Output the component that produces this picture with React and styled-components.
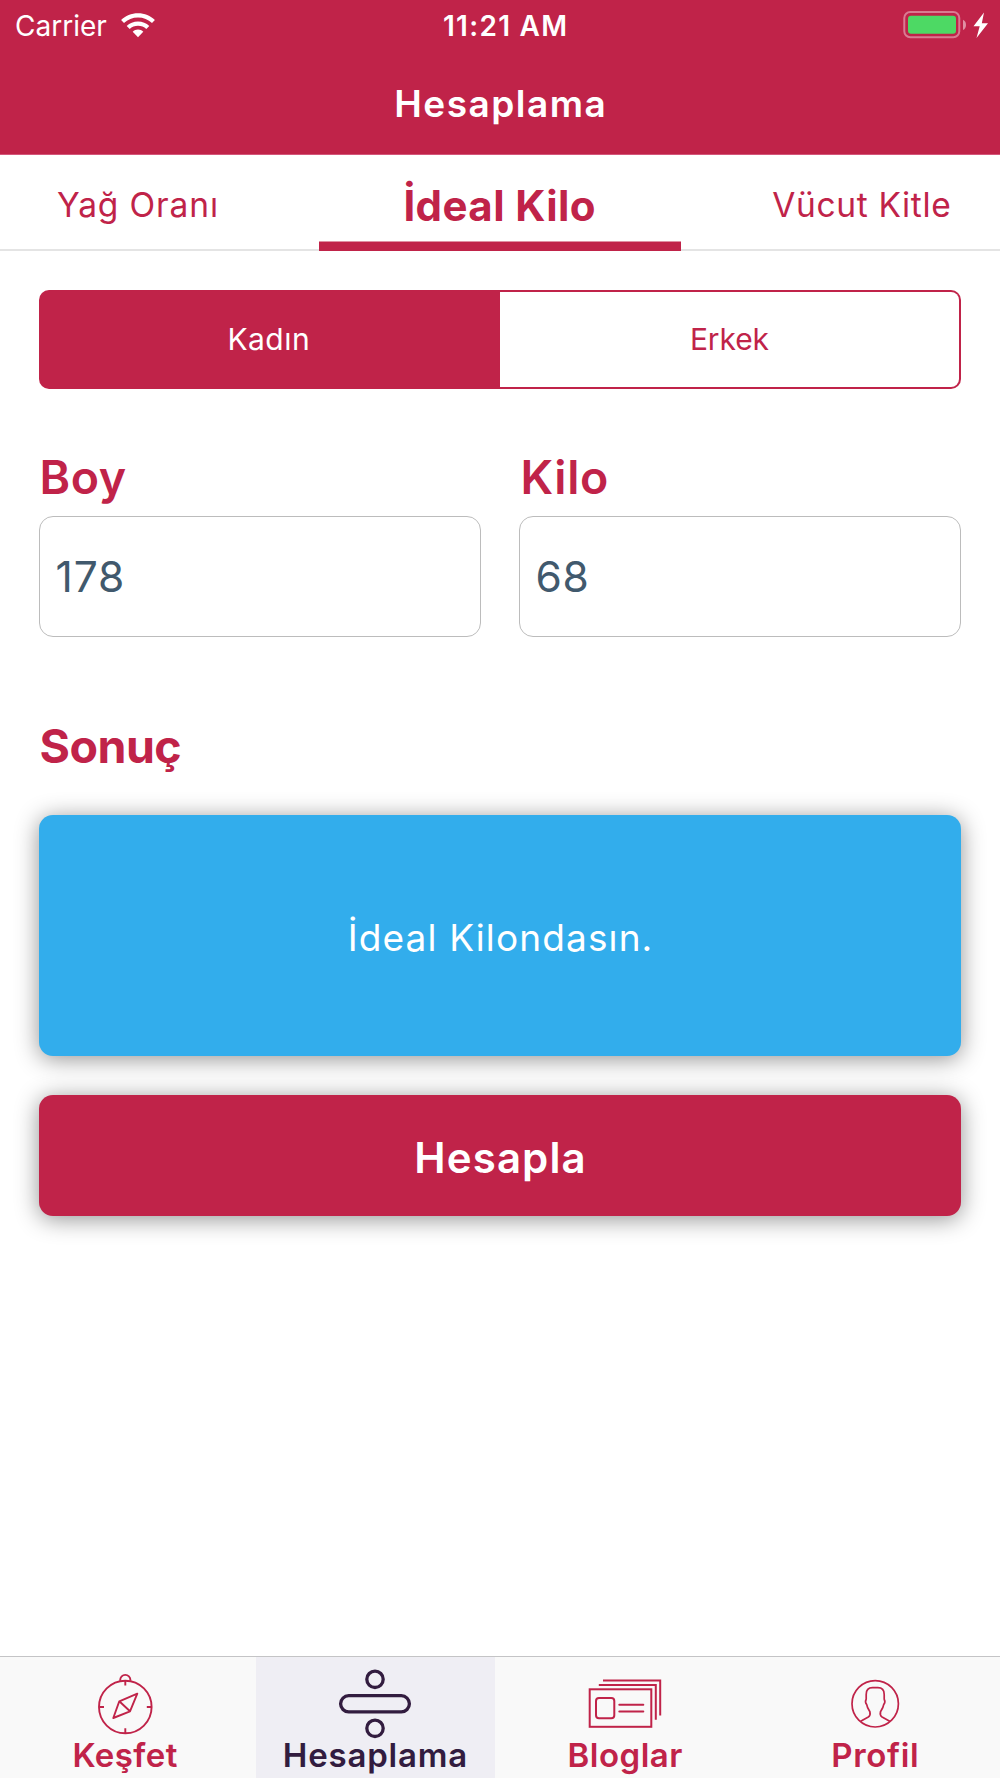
import React, { useState } from "react";
import styled, { createGlobalStyle } from "styled-components";

const crimson = "#c02349";
const plum = "#321c3f";
const shadow = "0 3px 23px rgba(0, 0, 0, 0.43)";

const GlobalStyle = createGlobalStyle`
  *, *::before, *::after { box-sizing: border-box; }
  body { margin: 0; background: #fff; }
  button, input { margin: 0; font-family: inherit; }
`;

const Screen = styled.div`
  display: flex;
  flex-direction: column;
  width: 1000px;
  height: 1778px;
  overflow: hidden;
  background: #fff;
  color: ${crimson};
  font-family: Inter, Roboto, sans-serif;
`;

/* Tracked text; the trailing letter gap is cancelled so it centres on its ink. */
const Text = styled.span`
  display: block;
  white-space: nowrap;
  font-size: ${(p) => p.$size}px;
  font-weight: ${(p) => p.$weight || 400};
  letter-spacing: ${(p) => p.$track || 0}px;
  margin-right: ${(p) => -(p.$track || 0)}px;
`;

const Header = styled.header`
  flex: none;
  height: 155px;
  background: ${crimson};
  border-bottom: 1px solid #d4567a;
  color: #fff;
`;

const StatusBar = styled.div`
  display: grid;
  grid-template-columns: 1fr auto 1fr;
  align-items: center;
  height: 50px;
  padding: 0 12px 0 15px;
`;

const StatusLeft = styled.div`
  display: flex;
  align-items: center;
  gap: 14px;
`;

const StatusRight = styled.div`
  display: flex;
  justify-content: flex-end;
`;

const StatusText = styled(Text)`
  padding-top: 1px;
`;

const Clock = styled(StatusText)`
  padding-left: 7px;
`;

const NavTitle = styled.h1`
  display: flex;
  align-items: center;
  justify-content: center;
  height: 104px;
  margin: 0;
  padding-top: 2px;
`;

const TabStrip = styled.nav`
  flex: none;
  display: flex;
  justify-content: center;
  height: 96px;
  overflow: hidden;
  box-shadow: inset 0 -2px 0 #e4e4e4;
`;

const PlainButton = styled.button`
  display: flex;
  align-items: center;
  justify-content: center;
  padding: 0;
  border: 0;
  background: transparent;
  color: inherit;
`;

const Tab = styled(PlainButton)`
  flex: none;
  width: 362px;
  padding-top: 4px;
  padding-right: 1px;
  box-shadow: ${(p) => (p.$active ? `inset 0 -9.5px 0 ${crimson}` : "none")};
`;

const Content = styled.main`
  flex: 1;
  display: flex;
  flex-direction: column;
  padding: 39px 39px 0;
`;

const Segments = styled.div`
  display: grid;
  grid-template-columns: 1fr 1fr;
  height: 99px;
`;

const Segment = styled(PlainButton)`
  padding: 0 4px 1px 0;
  border: 2px solid ${crimson};
  background: ${(p) => (p.$active ? crimson : "#fff")};
  color: ${(p) => (p.$active ? "#fff" : crimson)};
  &:first-child { border-radius: 10px 0 0 10px; border-right: 0; }
  &:last-child { border-radius: 0 10px 10px 0; border-left: 0; padding-right: 0; }
`;

const Fields = styled.div`
  display: grid;
  grid-template-columns: 1fr 1fr;
  gap: 38px;
  margin-top: 56px;
`;

const Field = styled.label`
  display: flex;
  flex-direction: column;
  gap: 11px;
`;

const Heading = styled(Text)`
  height: 60px;
  line-height: ${(p) => p.$line}px;
  padding-left: ${(p) => p.$indent}px;
`;

const Input = styled.input`
  width: 100%;
  height: 121px;
  padding: 0 16px 0 ${(p) => p.$indent}px;
  border: 1px solid #bcbcbc;
  border-radius: 14px;
  outline: none;
  background: #fff;
  color: #41596d;
  font-size: 42.5px;
  letter-spacing: ${(p) => p.$track}px;
`;

const Result = styled.section`
  display: flex;
  flex-direction: column;
  gap: 42px;
  margin-top: 76px;
`;

const ResultCard = styled.div`
  display: flex;
  align-items: center;
  justify-content: center;
  height: 241px;
  padding-top: 3px;
  border-radius: 14px;
  background: #32adec;
  box-shadow: ${shadow};
  color: #fff;
`;

const SubmitButton = styled(PlainButton)`
  height: 121px;
  margin-top: 39px;
  padding-top: 3px;
  border-radius: 14px;
  background: ${crimson};
  box-shadow: ${shadow};
  color: #fff;
`;

const TabBar = styled.footer`
  flex: none;
  display: grid;
  grid-template-columns: repeat(4, 1fr);
  height: 122px;
  border-top: 1px solid #c4c4c6;
  background: #f9f9f9;
`;

const TabItem = styled(PlainButton)`
  flex-direction: column;
  justify-content: flex-start;
  margin: 0 5px 0 6px;
  padding-right: 1px;
  background: ${(p) => (p.$active ? "#efeef4" : "transparent")};
  color: ${(p) => (p.$active ? plum : crimson)};
`;

const TabLabel = styled(Text)`
  height: 40px;
  line-height: 43px;
`;

const LineIcon = styled.svg`
  flex: none;
  display: block;
  width: 100px;
  height: 77px;
  overflow: visible;
  fill: none;
  stroke: currentColor;
  stroke-width: ${(p) => p.$stroke};
`;

const WifiIcon = () => (
  <svg width="34" height="25" viewBox="0 0 34 25" fill="#fff">
    <path d="M17 0.3C23.6 0.3 29.6 2.9 33.9 7.1L31 10.1C27.3 6.6 22.4 4.6 17 4.6S6.7 6.6 3 10.1L0.1 7.1C4.4 2.9 10.4 0.3 17 0.3Z" />
    <path d="M17 8.4C21.4 8.4 25.4 10.1 28.3 12.9L25.3 15.9C23.1 13.9 20.2 12.7 17 12.7S10.9 13.9 8.7 15.9L5.7 12.9C8.6 10.1 12.6 8.4 17 8.4Z" />
    <path d="M17 16.6C19 16.6 20.9 17.4 22.3 18.7L17 24.3L11.7 18.7C13.1 17.4 15 16.6 17 16.6Z" />
  </svg>
);

const BatteryIcon = () => (
  <svg width="85" height="28" viewBox="0 0 85 28">
    <rect x="1.3" y="1" width="55" height="25.2" rx="6" fill="none" stroke="#fff" strokeOpacity="0.4" strokeWidth="2" />
    <rect x="5" y="4.7" width="48" height="18" rx="3" fill="#4dd964" />
    <path d="M60 8.7V19C64 17.2 64 10.5 60 8.7Z" fill="#fff" fillOpacity="0.5" />
    <path d="M81 1.5L70.5 15.3H76.7L73.5 27L85 12.2H78.8Z" fill="#fff" />
  </svg>
);

const CompassIcon = () => (
  <LineIcon viewBox="0 0 100 77" $stroke={1.9}>
    <circle cx="50.3" cy="50" r="26.3" />
    <path d="M45.2 23.8V23A5.1 5.1 0 0 1 55.4 23V23.8" />
    <path d="M50.3 23.7V28.6M50.3 71.3V76M24 50H29M71.8 50H76.8" />
    <path d="M62.3 36.7L44.3 44.3L38.3 61L55 54.3ZM44.3 44.3L55 54.3" strokeLinejoin="round" />
  </LineIcon>
);

const DivideIcon = () => (
  <LineIcon viewBox="0 0 100 77" $stroke={3.3}>
    <circle cx="50" cy="22.3" r="8.2" />
    <rect x="15.6" y="38.7" width="68.8" height="16.2" rx="8.1" />
    <circle cx="50" cy="71.3" r="8.2" />
  </LineIcon>
);

const CardsIcon = () => (
  <LineIcon viewBox="0 0 100 77" $stroke={2}>
    <rect x="14.7" y="32.3" width="61.6" height="37.5" />
    <rect x="21" y="41" width="18.3" height="20.3" rx="3" />
    <path d="M44.3 47.8H68.3M44.3 54.4H68.3" strokeLinecap="round" />
    <path d="M23.8 28H80.8V62.8M28 23.6H85.2V58.6" />
  </LineIcon>
);

const ProfileIcon = () => (
  <LineIcon viewBox="0 0 100 77" $stroke={1.7}>
    <circle cx="50.2" cy="46.8" r="23.2" />
    <path
      strokeLinejoin="round"
      d="M35.7 64.2L43.3 60C45.2 58.8 45.4 57 44.9 54.6C43.6 52.4 42.2 50.6 41.8 47.8C40.5 46.2 40.3 43.8 41.2 42.2V37.5C41.2 32.5 43.8 30.7 47.5 30.7H52.9C56.6 30.7 59.2 32.5 59.2 37.5V42.2C60.1 43.8 59.9 46.2 58.6 47.8C58.2 50.6 56.8 52.4 55.5 54.6C55 57 55.2 58.8 57.1 60L64.7 64.2"
    />
  </LineIcon>
);

const topTabs = [
  { name: "Yağ Oranı", track: 0.88 },
  { name: "İdeal Kilo", track: 0.42 },
  { name: "Vücut Kitle", track: 0.65 },
];

const genders = [
  { name: "Kadın", track: 0.47 },
  { name: "Erkek", track: -0.1 },
];

const destinations = [
  { name: "Keşfet", track: 0.45, Icon: CompassIcon },
  { name: "Hesaplama", track: 0.8, Icon: DivideIcon },
  { name: "Bloglar", track: 0.5, Icon: CardsIcon },
  { name: "Profil", track: 0.65, Icon: ProfileIcon },
];

export default function App() {
  const [topTab, setTopTab] = useState("İdeal Kilo");
  const [gender, setGender] = useState("Kadın");
  const [height, setHeight] = useState("178");
  const [weight, setWeight] = useState("68");

  return (
    <>
      <GlobalStyle />
      <Screen lang="tr">
        <Header>
          <StatusBar>
            <StatusLeft>
              <StatusText $size={28}>Carrier</StatusText>
              <WifiIcon />
            </StatusLeft>
            <Clock $size={28} $weight={600} $track={1.3}>11:21 AM</Clock>
            <StatusRight>
              <BatteryIcon />
            </StatusRight>
          </StatusBar>
          <NavTitle>
            <Text $size={37} $weight={600} $track={1.5}>Hesaplama</Text>
          </NavTitle>
        </Header>

        <TabStrip>
          {topTabs.map(({ name, track }) => {
            const active = name === topTab;
            return (
              <Tab key={name} $active={active} onClick={() => setTopTab(name)}>
                <Text $size={active ? 42 : 33.5} $weight={active ? 700 : 400} $track={track}>{name}</Text>
              </Tab>
            );
          })}
        </TabStrip>

        <Content>
          <Segments>
            {genders.map(({ name, track }) => (
              <Segment key={name} $active={name === gender} onClick={() => setGender(name)}>
                <Text $size={30} $track={track}>{name}</Text>
              </Segment>
            ))}
          </Segments>

          <Fields>
            <Field>
              <Heading $size={46.5} $weight={600} $track={0.6} $indent={0.5} $line={65}>Boy</Heading>
              <Input $indent={15.5} $track={0.9} value={height} onChange={(e) => setHeight(e.target.value)} />
            </Field>
            <Field>
              <Heading $size={46.5} $weight={600} $track={0.67} $indent={1.5} $line={65}>Kilo</Heading>
              <Input $indent={15.5} $track={0.65} value={weight} onChange={(e) => setWeight(e.target.value)} />
            </Field>
          </Fields>

          <Result>
            <Heading $size={46.5} $weight={700} $track={-0.5} $indent={0.5} $line={67}>Sonuç</Heading>
            <ResultCard>
              <Text $size={37} $track={1.13}>İdeal Kilondasın.</Text>
            </ResultCard>
          </Result>

          <SubmitButton>
            <Text $size={42} $weight={600} $track={1.1}>Hesapla</Text>
          </SubmitButton>
        </Content>

        <TabBar>
          {destinations.map(({ name, track, Icon }) => (
            <TabItem key={name} $active={name === "Hesaplama"}>
              <Icon />
              <TabLabel $size={33} $weight={600} $track={track}>{name}</TabLabel>
            </TabItem>
          ))}
        </TabBar>
      </Screen>
    </>
  );
}
